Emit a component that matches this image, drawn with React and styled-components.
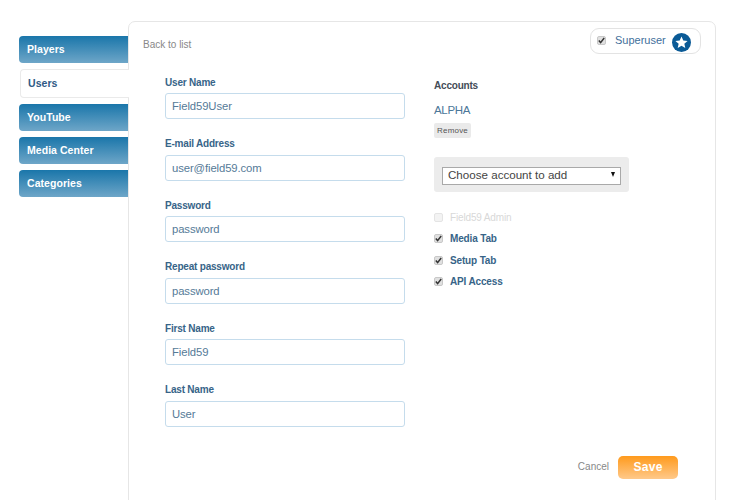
import React from "react";
import styled, { createGlobalStyle } from "styled-components";

const GlobalStyle = createGlobalStyle`
  html, body {
    margin: 0;
    height: 100%;
    background: #fff;
    overflow: hidden;
  }
  body {
    font-family: "Liberation Sans", Arial, sans-serif;
  }
`;

const Page = styled.div`
  display: flex;
  align-items: flex-start;
  width: 730px;
  height: 500px;
  padding: 21px 14px 0 19px;
  box-sizing: border-box;
  overflow: hidden;
`;

const Sidebar = styled.nav`
  display: flex;
  flex-direction: column;
  gap: 6px;
  width: 109px;
  margin-top: 15px;
  flex-shrink: 0;
`;

const Tab = styled.a`
  display: flex;
  align-items: center;
  box-sizing: border-box;
  height: ${(p) => (p.$active ? "29px" : "27px")};
  padding-left: ${(p) => (p.$active ? "7px" : "8px")};
  padding-bottom: 1px;
  margin-left: ${(p) => (p.$active ? "1px" : "0")};
  border-radius: 4px 0 0 4px;
  font-size: 10.5px;
  font-weight: bold;
  letter-spacing: 0.05px;
  color: ${(p) => (p.$active ? "#2f5a85" : "#fff")};
  background: ${(p) =>
    p.$active ? "#fff" : "linear-gradient(to bottom, #1a76aa, #6ea6c8)"};
  border: ${(p) => (p.$active ? "1px solid #eaeaea" : "none")};
  border-right: none;
  margin-right: ${(p) => (p.$active ? "-1px" : "0")};
  position: relative;
  z-index: ${(p) => (p.$active ? 2 : 0)};
`;

const Panel = styled.main`
  position: relative;
  flex: 1;
  height: 520px;
  box-sizing: border-box;
  border: 1px solid #e6e6e6;
  border-radius: 7px;
  background: #fff;
  padding: 0 36px 0 36px;
`;

const TopBar = styled.div`
  display: flex;
  justify-content: space-between;
  align-items: flex-start;
  box-sizing: border-box;
  height: 55px;
  margin: 0 -22px 0 -22px;
  padding: 6px 0 0 0;
`;

const BackLink = styled.a`
  margin-top: 11px;
  font-size: 10px;
  color: #888;
`;

const SuperBox = styled.label`
  display: flex;
  align-items: center;
  box-sizing: border-box;
  width: 111px;
  height: 26px;
  padding: 0 9px 2px 6px;
  border: 1px solid #e3e3e3;
  border-radius: 9px;
  font-size: 11px;
  color: #3f6f9c;
`;

const SuperText = styled.span`
  margin-left: 9px;
  flex: 1;
`;

const Columns = styled.div`
  display: flex;
  gap: 29px;
`;

const LeftColumn = styled.div`
  display: flex;
  flex-direction: column;
  gap: 19.1px;
  width: 240px;
`;

const RightColumn = styled.div`
  display: flex;
  flex-direction: column;
  width: 200px;
`;

const Field = styled.div`
  display: flex;
  flex-direction: column;
  gap: 4.4px;
`;

const Label = styled.label`
  font-size: 10px;
  font-weight: bold;
  letter-spacing: -0.2px;
  line-height: 12px;
  color: #376488;
`;

const TextInput = styled.input`
  box-sizing: border-box;
  width: 240px;
  height: 26px;
  padding: 0 6px;
  border: 1px solid #c5dcec;
  border-radius: 3px;
  font-family: inherit;
  font-size: 11.3px;
  letter-spacing: -0.1px;
  color: #557a97;
  outline: none;
`;

const Heading = styled.h3`
  margin: 3px 0 0;
  font-size: 10px;
  letter-spacing: -0.2px;
  line-height: 12px;
  font-weight: bold;
  color: #444c57;
`;

const AccountName = styled.div`
  margin-top: 11px;
  font-size: 11.5px;
  letter-spacing: -0.3px;
  line-height: 14px;
  color: #4c7799;
`;

const RemoveButton = styled.button`
  align-self: flex-start;
  width: 37px;
  height: 15px;
  margin-top: 6px;
  padding: 0;
  border: none;
  border-radius: 2px;
  background: #eaeaea;
  font-family: inherit;
  font-size: 8px;
  letter-spacing: 0.2px;
  color: #555;
`;

const SelectWrap = styled.div`
  display: flex;
  align-items: center;
  box-sizing: border-box;
  width: 195px;
  height: 35px;
  margin-top: 19px;
  padding: 0 8px 1px;
  border-radius: 3px;
  background: #ececec;
`;

const SelectBox = styled.div`
  position: relative;
  width: 179px;
  height: 18px;

  &::after {
    content: "";
    position: absolute;
    right: 6px;
    top: 7px;
    border-left: 2.5px solid transparent;
    border-right: 2.5px solid transparent;
    border-top: 5px solid #111;
    pointer-events: none;
  }
`;

const AccountSelect = styled.select`
  appearance: none;
  box-sizing: border-box;
  width: 100%;
  height: 100%;
  padding: 0 5px 2px;
  border: 1px solid #a9a9a9;
  border-radius: 0;
  background: #fff;
  font-family: inherit;
  font-size: 11.6px;
  color: #444;
`;

const Permissions = styled.div`
  display: flex;
  flex-direction: column;
  gap: 8.5px;
  margin-top: 18.6px;
`;

const Permission = styled.label`
  display: flex;
  align-items: center;
  gap: 7px;
  height: 13px;
  font-size: 10px;
  letter-spacing: -0.15px;
  font-weight: ${(p) => (p.$disabled ? "normal" : "bold")};
  color: ${(p) => (p.$disabled ? "#d8d8d8" : "#376488")};
`;

const CheckBox = styled.span`
  display: inline-flex;
  align-items: center;
  justify-content: center;
  box-sizing: border-box;
  width: 9px;
  height: 9px;
  border-radius: 2px;
  border: 1px solid ${(p) => (p.$disabled ? "#e4e4e4" : "#c8c8c8")};
  background: ${(p) => (p.$disabled ? "#f3f3f3" : "#e0e0e0")};
  flex-shrink: 0;
`;

const StarBadge = styled.svg`
  width: 19px;
  height: 19px;
  margin-bottom: -5px;
  flex-shrink: 0;
`;

const Actions = styled.div`
  position: absolute;
  right: 37px;
  top: 434px;
  display: flex;
  align-items: center;
  gap: 9px;
`;

const CancelLink = styled.a`
  margin-bottom: 2px;
  font-size: 10px;
  color: #888;
`;

const SaveButton = styled.button`
  width: 60px;
  height: 23px;
  padding: 0 0 2px;
  border: none;
  border-radius: 5px;
  background: linear-gradient(to bottom, #ff9a1c, #ffc98a);
  font-family: inherit;
  font-size: 12px;
  font-weight: bold;
  letter-spacing: 0.3px;
  color: #fff;
`;

const Tick = () => (
  <svg width="7" height="7" viewBox="0 0 7 7">
    <path d="M0.8 3.6 L2.6 5.6 L6.2 1" fill="none" stroke="#333" strokeWidth="1.5" />
  </svg>
);

const tabs = ["Players", "Users", "YouTube", "Media Center", "Categories"];

const fields = [
  ["User Name", "Field59User"],
  ["E-mail Address", "user@field59.com"],
  ["Password", "password"],
  ["Repeat password", "password"],
  ["First Name", "Field59"],
  ["Last Name", "User"],
];

const permissions = [
  ["Field59 Admin", false],
  ["Media Tab", true],
  ["Setup Tab", true],
  ["API Access", true],
];

const App = () => {
  return (
    <>
      <GlobalStyle />
      <Page>
        <Sidebar>
          {tabs.map((tab) => (
            <Tab key={tab} $active={tab === "Users"}>
              {tab}
            </Tab>
          ))}
        </Sidebar>
        <Panel>
          <TopBar>
            <BackLink>Back to list</BackLink>
            <SuperBox>
              <CheckBox>
                <Tick />
              </CheckBox>
              <SuperText>Superuser</SuperText>
              <StarBadge viewBox="0 0 20 20">
                <circle cx="10" cy="10" r="10" fill="#0a5a96" />
                <path
                  d="M10 3.6 L11.9 7.9 L16.4 8.3 L13 11.3 L14 15.9 L10 13.5 L6 15.9 L7 11.3 L3.6 8.3 L8.1 7.9 Z"
                  fill="#fff"
                />
              </StarBadge>
            </SuperBox>
          </TopBar>
          <Columns>
            <LeftColumn>
              {fields.map(([label, value]) => (
                <Field key={label}>
                  <Label>{label}</Label>
                  <TextInput value={value} readOnly />
                </Field>
              ))}
            </LeftColumn>
            <RightColumn>
              <Heading>Accounts</Heading>
              <AccountName>ALPHA</AccountName>
              <RemoveButton>Remove</RemoveButton>
              <SelectWrap>
                <SelectBox>
                  <AccountSelect defaultValue="choose">
                    <option value="choose">Choose account to add</option>
                  </AccountSelect>
                </SelectBox>
              </SelectWrap>
              <Permissions>
                {permissions.map(([label, checked]) => (
                  <Permission key={label} $disabled={!checked}>
                    <CheckBox $disabled={!checked}>{checked && <Tick />}</CheckBox>
                    {label}
                  </Permission>
                ))}
              </Permissions>
            </RightColumn>
          </Columns>
          <Actions>
            <CancelLink>Cancel</CancelLink>
            <SaveButton>Save</SaveButton>
          </Actions>
        </Panel>
      </Page>
    </>
  );
};

export default App;
